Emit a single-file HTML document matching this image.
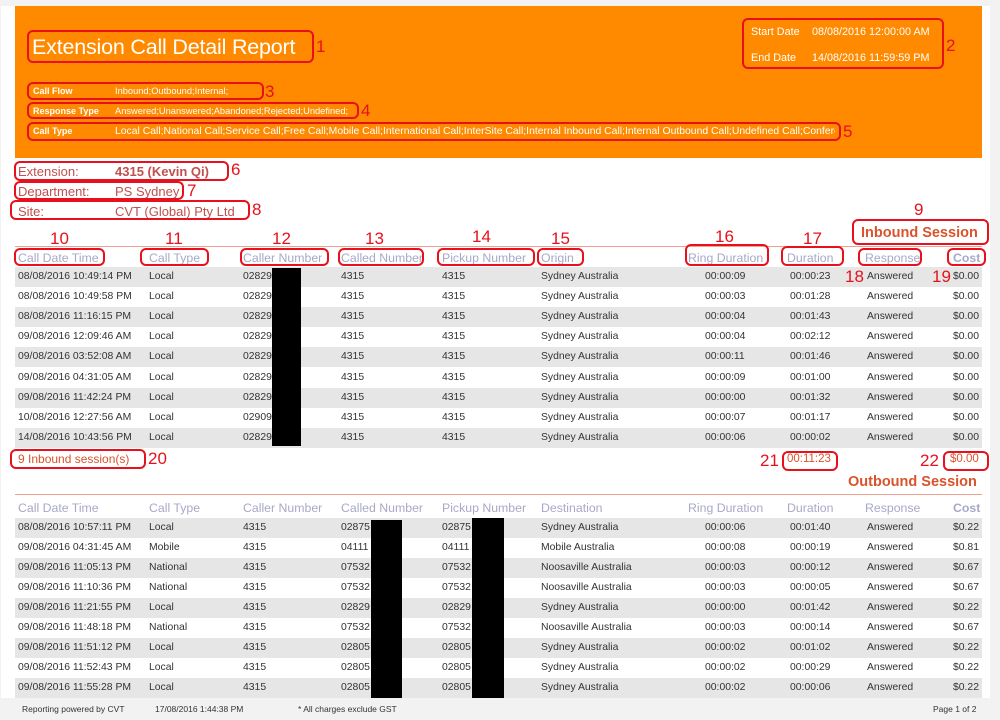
<!DOCTYPE html>
<html><head><meta charset="utf-8"><style>
*{margin:0;padding:0;box-sizing:border-box}
body{width:1000px;height:720px;background:#f2f2f2;position:relative;overflow:hidden;font-family:"Liberation Sans",sans-serif}
.pg{position:absolute;left:1px;top:6px;width:989px;height:692px;background:#fff}
.or{position:absolute;left:15px;top:6px;width:967px;height:152px;background:#ff8a00;color:#fff}
.a{position:absolute;white-space:nowrap}
.r{position:absolute;left:15px;width:967px;height:20px;font-size:10.4px;color:#333}
.r.s{background:#e6e6e6}
.r span{position:absolute;top:4px;white-space:nowrap}
.h{position:absolute;font-size:12.3px;color:#a8a8c8;white-space:nowrap}
.bx{position:absolute;border:2px solid #e8101c;border-radius:6px}
.n{position:absolute;color:#e8101c;font-size:17px;white-space:nowrap}
.blk{position:absolute;background:#000}
.lbl{color:#c0504d;font-size:13px}
</style></head><body>
<div class="pg"></div>
<div class="or">
 <div class="a" style="left:17px;top:29px;font-size:21.5px;letter-spacing:-0.2px">Extension Call Detail Report</div>
 <div class="a" style="left:736px;top:20px;font-size:10.8px">Start Date</div>
 <div class="a" style="left:797px;top:20px;font-size:10.8px">08/08/2016 12:00:00 AM</div>
 <div class="a" style="left:736px;top:46px;font-size:10.8px">End Date</div>
 <div class="a" style="left:797px;top:46px;font-size:10.8px">14/08/2016 11:59:59 PM</div>
 <div class="a" style="left:18px;top:80px;font-size:9px;font-weight:bold">Call Flow</div>
 <div class="a" style="left:100px;top:80px;font-size:9.3px">Inbound;Outbound;Internal;</div>
 <div class="a" style="left:18px;top:100px;font-size:9px;font-weight:bold">Response Type</div>
 <div class="a" style="left:100px;top:100px;font-size:9.3px">Answered;Unanswered;Abandoned;Rejected;Undefined;</div>
 <div class="a" style="left:18px;top:120px;font-size:9px;font-weight:bold">Call Type</div>
 <div class="a" style="left:100px;top:120px;font-size:10.4px;width:720px;overflow:hidden">Local Call;National Call;Service Call;Free Call;Mobile Call;International Call;InterSite Call;Internal Inbound Call;Internal Outbound Call;Undefined Call;Conference</div>
</div>
<div class="a lbl" style="left:18px;top:164px">Extension:</div>
<div class="a lbl" style="left:115px;top:164px;font-weight:bold">4315 (Kevin Qi)</div>
<div class="a lbl" style="left:18px;top:184px">Department:</div>
<div class="a lbl" style="left:115px;top:184px">PS Sydney</div>
<div class="a lbl" style="left:18px;top:204px">Site:</div>
<div class="a lbl" style="left:115px;top:204px">CVT (Global) Pty Ltd</div>

<div class="a" style="left:861px;top:225px;font-size:14.5px;font-weight:bold;color:#d9532b">Inbound Session</div>
<div class="a" style="left:15px;top:246px;width:967px;height:1px;background:#f0a090"></div>
<div class="h" style="left:18px;top:251px">Call Date Time</div>
<div class="h" style="left:149px;top:251px">Call Type</div>
<div class="h" style="left:243px;top:251px">Caller Number</div>
<div class="h" style="left:341px;top:251px">Called Number</div>
<div class="h" style="left:442px;top:251px">Pickup Number</div>
<div class="h" style="left:541px;top:251px">Origin</div>
<div class="h" style="left:688px;top:251px">Ring Duration</div>
<div class="h" style="left:787px;top:251px">Duration</div>
<div class="h" style="left:865px;top:251px">Response</div>
<div class="h" style="left:953px;top:251px;font-weight:bold">Cost</div>

<div class="r s" style="top:267px"><span style="left:3px">08/08/2016 10:49:14 PM</span><span style="left:134px">Local</span><span style="left:228px">02829</span><span style="left:326px">4315</span><span style="left:427px">4315</span><span style="left:526px">Sydney Australia</span><span style="left:690px">00:00:09</span><span style="left:775px">00:00:23</span><span style="left:852px">Answered</span><span style="right:3px">$0.00</span></div>
<div class="r" style="top:287px"><span style="left:3px">08/08/2016 10:49:58 PM</span><span style="left:134px">Local</span><span style="left:228px">02829</span><span style="left:326px">4315</span><span style="left:427px">4315</span><span style="left:526px">Sydney Australia</span><span style="left:690px">00:00:03</span><span style="left:775px">00:01:28</span><span style="left:852px">Answered</span><span style="right:3px">$0.00</span></div>
<div class="r s" style="top:307px"><span style="left:3px">08/08/2016 11:16:15 PM</span><span style="left:134px">Local</span><span style="left:228px">02829</span><span style="left:326px">4315</span><span style="left:427px">4315</span><span style="left:526px">Sydney Australia</span><span style="left:690px">00:00:04</span><span style="left:775px">00:01:43</span><span style="left:852px">Answered</span><span style="right:3px">$0.00</span></div>
<div class="r" style="top:327px"><span style="left:3px">09/08/2016 12:09:46 AM</span><span style="left:134px">Local</span><span style="left:228px">02829</span><span style="left:326px">4315</span><span style="left:427px">4315</span><span style="left:526px">Sydney Australia</span><span style="left:690px">00:00:04</span><span style="left:775px">00:02:12</span><span style="left:852px">Answered</span><span style="right:3px">$0.00</span></div>
<div class="r s" style="top:347px"><span style="left:3px">09/08/2016 03:52:08 AM</span><span style="left:134px">Local</span><span style="left:228px">02829</span><span style="left:326px">4315</span><span style="left:427px">4315</span><span style="left:526px">Sydney Australia</span><span style="left:690px">00:00:11</span><span style="left:775px">00:01:46</span><span style="left:852px">Answered</span><span style="right:3px">$0.00</span></div>
<div class="r" style="top:368px"><span style="left:3px">09/08/2016 04:31:05 AM</span><span style="left:134px">Local</span><span style="left:228px">02829</span><span style="left:326px">4315</span><span style="left:427px">4315</span><span style="left:526px">Sydney Australia</span><span style="left:690px">00:00:09</span><span style="left:775px">00:01:00</span><span style="left:852px">Answered</span><span style="right:3px">$0.00</span></div>
<div class="r s" style="top:388px"><span style="left:3px">09/08/2016 11:42:24 PM</span><span style="left:134px">Local</span><span style="left:228px">02829</span><span style="left:326px">4315</span><span style="left:427px">4315</span><span style="left:526px">Sydney Australia</span><span style="left:690px">00:00:00</span><span style="left:775px">00:01:32</span><span style="left:852px">Answered</span><span style="right:3px">$0.00</span></div>
<div class="r" style="top:408px"><span style="left:3px">10/08/2016 12:27:56 AM</span><span style="left:134px">Local</span><span style="left:228px">02909</span><span style="left:326px">4315</span><span style="left:427px">4315</span><span style="left:526px">Sydney Australia</span><span style="left:690px">00:00:07</span><span style="left:775px">00:01:17</span><span style="left:852px">Answered</span><span style="right:3px">$0.00</span></div>
<div class="r s" style="top:428px"><span style="left:3px">14/08/2016 10:43:56 PM</span><span style="left:134px">Local</span><span style="left:228px">02829</span><span style="left:326px">4315</span><span style="left:427px">4315</span><span style="left:526px">Sydney Australia</span><span style="left:690px">00:00:06</span><span style="left:775px">00:00:02</span><span style="left:852px">Answered</span><span style="right:3px">$0.00</span></div>
<div class="blk" style="left:272px;top:268px;width:29px;height:178px"></div>

<div class="a" style="left:18px;top:452px;font-size:12px;color:#d9532b">9 Inbound session(s)</div>
<div class="a" style="left:787px;top:453px;font-size:11.5px;color:#d9532b">00:11:23</div>
<div class="a" style="left:950px;top:453px;font-size:11.5px;color:#d9532b">$0.00</div>

<div class="a" style="left:848px;top:474px;font-size:14.5px;font-weight:bold;color:#d9532b">Outbound Session</div>
<div class="a" style="left:15px;top:494px;width:967px;height:1px;background:#f0a090"></div>
<div class="h" style="left:18px;top:501px">Call Date Time</div>
<div class="h" style="left:149px;top:501px">Call Type</div>
<div class="h" style="left:243px;top:501px">Caller Number</div>
<div class="h" style="left:341px;top:501px">Called Number</div>
<div class="h" style="left:442px;top:501px">Pickup Number</div>
<div class="h" style="left:541px;top:501px">Destination</div>
<div class="h" style="left:688px;top:501px">Ring Duration</div>
<div class="h" style="left:787px;top:501px">Duration</div>
<div class="h" style="left:865px;top:501px">Response</div>
<div class="h" style="left:953px;top:501px;font-weight:bold">Cost</div>

<div class="r s" style="top:518px"><span style="left:3px">08/08/2016 10:57:11 PM</span><span style="left:134px">Local</span><span style="left:228px">4315</span><span style="left:326px">02875</span><span style="left:427px">02875</span><span style="left:526px">Sydney Australia</span><span style="left:690px">00:00:06</span><span style="left:775px">00:01:40</span><span style="left:852px">Answered</span><span style="right:3px">$0.22</span></div>
<div class="r" style="top:538px"><span style="left:3px">09/08/2016 04:31:45 AM</span><span style="left:134px">Mobile</span><span style="left:228px">4315</span><span style="left:326px">04111</span><span style="left:427px">04111</span><span style="left:526px">Mobile Australia</span><span style="left:690px">00:00:08</span><span style="left:775px">00:00:19</span><span style="left:852px">Answered</span><span style="right:3px">$0.81</span></div>
<div class="r s" style="top:558px"><span style="left:3px">09/08/2016 11:05:13 PM</span><span style="left:134px">National</span><span style="left:228px">4315</span><span style="left:326px">07532</span><span style="left:427px">07532</span><span style="left:526px">Noosaville Australia</span><span style="left:690px">00:00:03</span><span style="left:775px">00:00:12</span><span style="left:852px">Answered</span><span style="right:3px">$0.67</span></div>
<div class="r" style="top:578px"><span style="left:3px">09/08/2016 11:10:36 PM</span><span style="left:134px">National</span><span style="left:228px">4315</span><span style="left:326px">07532</span><span style="left:427px">07532</span><span style="left:526px">Noosaville Australia</span><span style="left:690px">00:00:03</span><span style="left:775px">00:00:05</span><span style="left:852px">Answered</span><span style="right:3px">$0.67</span></div>
<div class="r s" style="top:598px"><span style="left:3px">09/08/2016 11:21:55 PM</span><span style="left:134px">Local</span><span style="left:228px">4315</span><span style="left:326px">02829</span><span style="left:427px">02829</span><span style="left:526px">Sydney Australia</span><span style="left:690px">00:00:00</span><span style="left:775px">00:01:42</span><span style="left:852px">Answered</span><span style="right:3px">$0.22</span></div>
<div class="r" style="top:618px"><span style="left:3px">09/08/2016 11:48:18 PM</span><span style="left:134px">National</span><span style="left:228px">4315</span><span style="left:326px">07532</span><span style="left:427px">07532</span><span style="left:526px">Noosaville Australia</span><span style="left:690px">00:00:03</span><span style="left:775px">00:00:14</span><span style="left:852px">Answered</span><span style="right:3px">$0.67</span></div>
<div class="r s" style="top:638px"><span style="left:3px">09/08/2016 11:51:12 PM</span><span style="left:134px">Local</span><span style="left:228px">4315</span><span style="left:326px">02805</span><span style="left:427px">02805</span><span style="left:526px">Sydney Australia</span><span style="left:690px">00:00:02</span><span style="left:775px">00:01:02</span><span style="left:852px">Answered</span><span style="right:3px">$0.22</span></div>
<div class="r" style="top:658px"><span style="left:3px">09/08/2016 11:52:43 PM</span><span style="left:134px">Local</span><span style="left:228px">4315</span><span style="left:326px">02805</span><span style="left:427px">02805</span><span style="left:526px">Sydney Australia</span><span style="left:690px">00:00:02</span><span style="left:775px">00:00:29</span><span style="left:852px">Answered</span><span style="right:3px">$0.22</span></div>
<div class="r s" style="top:678px"><span style="left:3px">09/08/2016 11:55:28 PM</span><span style="left:134px">Local</span><span style="left:228px">4315</span><span style="left:326px">02805</span><span style="left:427px">02805</span><span style="left:526px">Sydney Australia</span><span style="left:690px">00:00:02</span><span style="left:775px">00:00:06</span><span style="left:852px">Answered</span><span style="right:3px">$0.22</span></div>
<div class="blk" style="left:371px;top:520px;width:31px;height:178px"></div>
<div class="blk" style="left:472px;top:518px;width:32px;height:180px"></div>

<div class="a" style="left:22px;top:704px;font-size:8.5px;color:#333">Reporting powered by CVT</div>
<div class="a" style="left:155px;top:704px;font-size:8.5px;color:#333">17/08/2016 1:44:38 PM</div>
<div class="a" style="left:298px;top:704px;font-size:8.5px;color:#333">* All charges exclude GST</div>
<div class="a" style="left:933px;top:704px;font-size:8.5px;color:#333">Page 1 of 2</div>

<!-- annotations -->
<div class="bx" style="left:27px;top:30px;width:287px;height:33px"></div><div class="n" style="left:316px;top:37px">1</div>
<div class="bx" style="left:742px;top:18px;width:202px;height:51px"></div><div class="n" style="left:946px;top:36px">2</div>
<div class="bx" style="left:27px;top:82px;width:237px;height:18px"></div><div class="n" style="left:265px;top:82px">3</div>
<div class="bx" style="left:27px;top:102px;width:332px;height:17px"></div><div class="n" style="left:361px;top:101px">4</div>
<div class="bx" style="left:27px;top:122px;width:814px;height:19px"></div><div class="n" style="left:843px;top:122px">5</div>
<div class="bx" style="left:14px;top:161px;width:215px;height:20px"></div><div class="n" style="left:231px;top:160px">6</div>
<div class="bx" style="left:14px;top:181px;width:170px;height:19px"></div><div class="n" style="left:187px;top:181px">7</div>
<div class="bx" style="left:10px;top:200px;width:240px;height:20px"></div><div class="n" style="left:252px;top:200px">8</div>
<div class="n" style="left:914px;top:200px">9</div>
<div class="bx" style="left:852px;top:219px;width:137px;height:26px"></div>
<div class="n" style="left:50px;top:229px">10</div><div class="bx" style="left:14px;top:248px;width:91px;height:18px"></div>
<div class="n" style="left:165px;top:229px">11</div><div class="bx" style="left:140px;top:248px;width:69px;height:18px"></div>
<div class="n" style="left:272px;top:229px">12</div><div class="bx" style="left:240px;top:248px;width:89px;height:18px"></div>
<div class="n" style="left:365px;top:229px">13</div><div class="bx" style="left:338px;top:248px;width:86px;height:18px"></div>
<div class="n" style="left:472px;top:227px">14</div><div class="bx" style="left:437px;top:248px;width:98px;height:18px"></div>
<div class="n" style="left:551px;top:229px">15</div><div class="bx" style="left:537px;top:248px;width:47px;height:18px"></div>
<div class="n" style="left:715px;top:227px">16</div><div class="bx" style="left:685px;top:244px;width:84px;height:22px"></div>
<div class="n" style="left:803px;top:229px">17</div><div class="bx" style="left:781px;top:246px;width:63px;height:20px"></div>
<div class="n" style="left:845px;top:267px">18</div><div class="bx" style="left:858px;top:248px;width:64px;height:18px"></div>
<div class="n" style="left:932px;top:267px">19</div><div class="bx" style="left:947px;top:248px;width:39px;height:18px"></div>
<div class="bx" style="left:10px;top:449px;width:136px;height:20px"></div><div class="n" style="left:148px;top:449px">20</div>
<div class="n" style="left:760px;top:451px">21</div><div class="bx" style="left:782px;top:451px;width:56px;height:20px"></div>
<div class="n" style="left:920px;top:451px">22</div><div class="bx" style="left:943px;top:451px;width:46px;height:20px"></div>
</body></html>
